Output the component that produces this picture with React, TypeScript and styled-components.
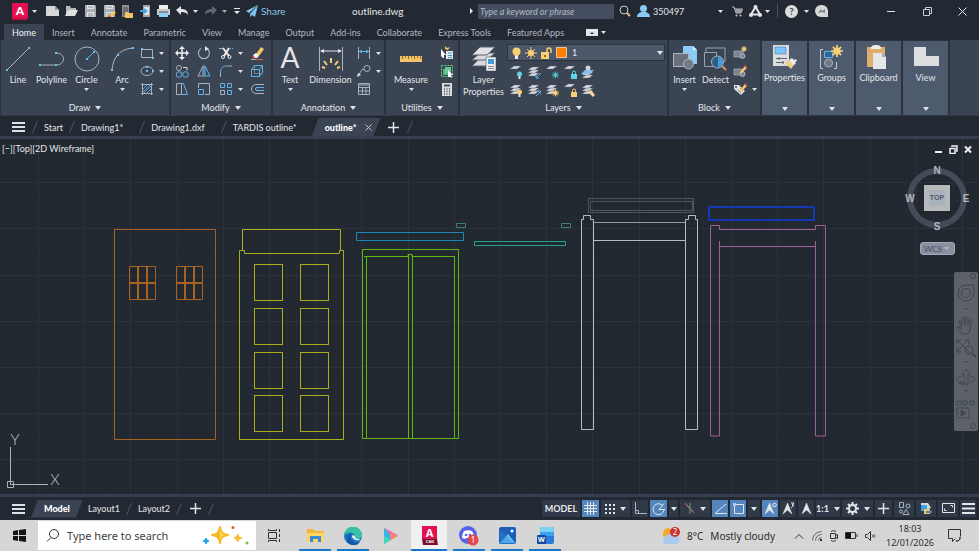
import React from 'react';
import styled, { createGlobalStyle } from 'styled-components';

const Global = createGlobalStyle`
  * { box-sizing: border-box; }
  body { margin: 0; font-family: Lato, "Open Sans", sans-serif; font-size: 9px; color: #e4e7ea; background: #222933; }
  button, input, select { font: inherit; color: inherit; }
  button { padding: 0; border: 0; background: none; }
  svg { display: block; flex: none; }
`;

/* ---------- primitives ---------- */

type IcoProps = { w: number; h: number; children: React.ReactNode };
const Ico = ({ w, h, children }: IcoProps) => (
  <svg width={w} height={h} viewBox={`0 0 ${w} ${h}`} fill="none" aria-hidden="true">{children}</svg>
);
const Caret = ({ c = '#dfe2e6', big = false }: { c?: string; big?: boolean }) => (
  <Ico w={big ? 6 : 5} h={big ? 4 : 3}><path d={big ? 'M0 0h6L3 4z' : 'M0 0h5L2.500 3z'} fill={c} /></Ico>
);

const Page = styled.div`
  min-height: 100vh;
  display: flex;
  flex-direction: column;
`;
const Cell = styled.button<{ $w?: number }>`
  display: flex;
  flex: none;
  align-items: center;
  justify-content: center;
  width: ${p => (p.$w ? `${p.$w}px` : 'auto')};
`;
const Pair = styled.div<{ $gap?: number }>`
  display: flex;
  align-items: center;
  gap: ${p => p.$gap || 5}px;
`;

/* ---------- title bar ---------- */

const TitleBar = styled.header`
  display: flex;
  align-items: center;
  height: 22px;
  padding-left: 11px;
`;
const QuickAccess = styled.div`
  display: flex;
  align-items: center;
  gap: 6px;
  margin-left: 6px;
`;
const Share = styled.button`
  display: flex;
  align-items: center;
  gap: 3px;
  margin-left: 5px;
  color: #8cc4ea;
  font-size: 10px;
`;
const FileName = styled.h1`
  flex: 1;
  margin: 0;
  text-align: center;
  font-size: 10px;
  font-weight: 400;
`;
const SearchInput = styled.input`
  width: 136px;
  height: 15px;
  margin: 0 5px 0 4px;
  padding: 0 2px;
  border: 0;
  background: #454e60;
  font-style: italic;
  &::placeholder { color: #b4bac4; opacity: 1; }
`;
const Account = styled.button`
  display: flex;
  align-items: center;
  justify-content: space-between;
  width: 86px;
  margin: 0 9px 0 6px;
  span { flex: 1; text-align: left; margin-left: 3px; }
`;
const TitleTools = styled.div`
  display: flex;
  align-items: center;
  gap: 6px;
`;
const Divider = styled.i`
  width: 1px;
  height: 14px;
  margin: 0 1px;
  background: #4a5364;
`;
const WindowButtons = styled.div`
  display: flex;
  margin-left: 45px;
`;

const disk = (
  <>
    <path d="M1 1h10l1 1v11H1z" fill="#a9acb1" />
    <path d="M3 1h7v4H3zM3 8h7v5H3z" fill="#dfe1e3" />
    <path d="M4 10h5M4 12h5M4 3h5" stroke="#8b8f95" />
  </>
);

const Title = () => (
  <TitleBar>
    <Cell aria-label="Application menu">
      <svg width="18" height="19" viewBox="0 0 18 19" fill="none">
        <path d="M1 3l3-2v14l13 1-2 2H1z" fill="#8e0c36" />
        <path d="M1 1h16v15H1z" fill="#e51050" />
        <path d="M1 17h15" stroke="#c50c45" strokeWidth="2" />
        <text x="9" y="13" textAnchor="middle" fontSize="12" fontWeight="900" fill="#fff">A</text>
      </svg>
    </Cell>
    <Cell aria-label="Application options" $w={11}><Caret /></Cell>
    <QuickAccess>
      <Cell aria-label="New" $w={13}><Ico w={13} h={12}><path d="M0 1h9l4 4v6H0z" fill="#d6d6d6" /><path d="M9 1v4h4z" fill="#999" /></Ico></Cell>
      <Cell aria-label="Open" $w={13}><Ico w={13} h={12}><path d="M1 11V1h4l1 2h5v2" fill="#b9b9b9" /><path d="M0 11l3-6h10l-3 6z" fill="#e0e0e0" /></Ico></Cell>
      <Cell aria-label="Save" $w={13}><Ico w={13} h={14}>{disk}</Ico></Cell>
      <Cell aria-label="Save as" $w={13}><Ico w={13} h={14}>{disk}<path d="M5 13l6-6 2 2-5 4z" fill="#f7c64d" /><path d="M5 13l1-2 2 2z" fill="#e04848" /></Ico></Cell>
      <Cell aria-label="Open from web" $w={11}><Ico w={11} h={13}><path d="M0 0h7v12H0z" fill="#8f8f8f" /><path d="M1 2h5v8H1z" fill="#6c6c6c" /><path d="M3 7h3l1 1h4v5H3z" fill="#f2c469" /></Ico></Cell>
      <Cell aria-label="Save to mobile" $w={12}><Ico w={11} h={13}><path d="M3 0h7v12H3z" fill="#a3a3a3" /><path d="M4 2h5v8H4z" fill="#e3e3e3" /><path d="M0 5h4V3l4 3-4 3V7H0z" fill="#3ca5e8" /></Ico></Cell>
      <Cell aria-label="Plot" $w={13}><Ico w={13} h={13}><path d="M2 0h9v4H2z" fill="#efefef" /><path d="M0 4h13v6H0z" fill="#c9c9c9" /><path d="M2 7h9v5H2z" fill="#8fd0f5" /><path d="M2 7h9" stroke="#555" /></Ico></Cell>
      <Pair $gap={4}>
        <Cell aria-label="Undo" $w={13}><Ico w={13} h={10}><path d="M0 4l5-4v3c5 0 7 2 7 6-1-2-3-3-7-3v3z" fill="#e3e5e8" /></Ico></Cell>
        <Cell aria-label="Undo history"><Caret /></Cell>
      </Pair>
      <Pair>
        <Cell aria-label="Redo" $w={13}><Ico w={12} h={10}><path d="M12 4L7 0v3C2 3 0 5 0 9c1-2 3-3 7-3v3z" fill="#616770" /></Ico></Cell>
        <Cell aria-label="Redo history"><Caret c="#a6abb3" /></Cell>
      </Pair>
      <Cell aria-label="Customize toolbar" $w={8}><Ico w={6} h={6}><path d="M0 0h6v1H0zM0 3h6L3 6z" fill="#e3e5e8" /></Ico></Cell>
    </QuickAccess>
    <Share>
      <Ico w={12} h={12}><path d="M12 0L0 6l3 2zM12 0L4 9v3l2-2 3 2z" fill="#7cc3f2" /></Ico>
      Share
    </Share>
    <FileName>outline.dwg</FileName>
    <Cell aria-label="Collapse search" $w={4}><Ico w={4} h={6}><path d="M0 0l3 3-3 3z" fill="#e3e5e8" /></Ico></Cell>
    <SearchInput aria-label="Keyword search" placeholder="Type a keyword or phrase" />
    <Cell aria-label="Search"><Ico w={12} h={12}><circle cx="5" cy="5" r="4" stroke="#c9ccd1" /><path d="M8 8l3 3" stroke="#e8b98a" strokeWidth="2" /></Ico></Cell>
    <Account>
      <Ico w={13} h={12}><circle cx="6.500" cy="3.500" r="3.500" fill="#8cc8f5" /><path d="M0 12c0-3 2-5 6.500-5S13 9 13 12z" fill="#8cc8f5" /></Ico>
      <span>350497</span>
      <Caret />
    </Account>
    <TitleTools>
      <Cell aria-label="App store"><Ico w={11} h={11}><path d="M0 1h2l2 6h5l1.500-4H3" stroke="#b9bdc4" /><path d="M3 3h8L9 7H4z" fill="#9b9fa7" /><circle cx="4.500" cy="9.500" r="1" fill="#ccc" /><circle cx="8.500" cy="9.500" r="1" fill="#ccc" /></Ico></Cell>
      <Pair $gap={3}>
        <Cell aria-label="Autodesk account"><Ico w={13} h={12}><path d="M6.500 2L2 9.500h9z" stroke="#e3e5e8" strokeWidth="2" /><circle cx="6.500" cy="2" r="2" fill="#e3e5e8" /><circle cx="2" cy="10" r="2" fill="#e3e5e8" /><circle cx="11" cy="10" r="2" fill="#e3e5e8" /></Ico></Cell>
        <Cell aria-label="Account options"><Caret /></Cell>
      </Pair>
      <Divider />
      <Cell aria-label="Help"><svg width="13" height="13" viewBox="0 0 13 13"><circle cx="6.500" cy="6.500" r="6.500" fill="#dcdcdc" /><text x="6.500" y="10" fontSize="10" fontWeight="700" textAnchor="middle" fill="#3d4552">?</text></svg></Cell>
      <Cell aria-label="Help options"><Caret /></Cell>
      <Cell aria-label="Assistant"><Ico w={13} h={12}><path d="M6 0h1a6 6 0 016 6v6H6A6 6 0 016 0z" fill="#d8d8d8" /><path d="M3 8l3-4 1 2 3-2v4l-3-1z" fill="#7e838b" /></Ico></Cell>
    </TitleTools>
    <WindowButtons>
      <Cell aria-label="Minimize" $w={36}><Ico w={9} h={9}><path d="M0 4.500h8" stroke="#e3e5e8" /></Ico></Cell>
      <Cell aria-label="Restore" $w={36}><Ico w={9} h={9}><path d="M.5 2.500h6v6h-6zM2.500 2V.5h6v6H7" stroke="#c8ccd2" /></Ico></Cell>
      <Cell aria-label="Close" $w={34}><Ico w={9} h={9}><path d="M.5.5l8 8M8.500.5l-8 8" stroke="#e3e5e8" /></Ico></Cell>
    </WindowButtons>
  </TitleBar>
);

/* ---------- ribbon tabs ---------- */

const RibbonTabs = styled.nav`
  display: flex;
  align-items: flex-end;
  height: 18px;
  padding-left: 4px;
`;
const RibbonTab = styled.button<{ $on?: boolean }>`
  height: 16px;
  padding: 0 8px;
  line-height: 17px;
  white-space: nowrap;
  color: ${p => (p.$on ? '#f2f3f5' : '#b2b8c1')};
  background: ${p => (p.$on ? '#3b4453' : 'transparent')};
`;
const RibbonToggle = styled.button`
  display: flex;
  align-items: center;
  gap: 3px;
  height: 16px;
  margin-left: 14px;
`;
const tabs = ['Home', 'Insert', 'Annotate', 'Parametric', 'View', 'Manage', 'Output', 'Add-ins', 'Collaborate', 'Express Tools', 'Featured Apps'];

/* ---------- ribbon panels ---------- */

const Ribbon = styled.div`
  display: flex;
  gap: 2px;
  height: 76px;
  padding-left: 1px;
  background: #2a323e;
  border-bottom: 1px solid #313a47;
`;
const RibbonRest = styled.div`
  flex: 1;
  background: #3b4453;
`;
const Panel = styled.section<{ $w: number }>`
  display: flex;
  flex-direction: column;
  flex: none;
  width: ${p => p.$w}px;
  background: #3b4453;
`;
const PanelBody = styled.div`
  display: flex;
  flex: 1;
  padding-top: 4px;
`;
const PanelName = styled.button`
  display: flex;
  align-items: center;
  justify-content: center;
  gap: 5px;
  height: 15px;
`;
const BigButton = styled.button<{ $w: number }>`
  display: flex;
  flex-direction: column;
  flex: none;
  align-items: center;
  width: ${p => p.$w}px;
  line-height: 12px;
  white-space: nowrap;
`;
const BigIcon = styled.span`
  display: flex;
  align-items: center;
  justify-content: center;
  height: 30px;
`;
const DropMark = styled.span`
  padding-top: 2px;
`;
const ToolGrid = styled.div<{ $cols: string; $inset?: number }>`
  display: grid;
  grid-template-columns: ${p => p.$cols};
  grid-auto-rows: 18px;
  align-content: start;
  align-items: center;
  justify-items: ${p => (p.$inset === undefined ? 'center' : 'start')};
  padding-left: ${p => p.$inset || 0}px;
`;
const LayerArea = styled.div`
  display: flex;
  flex: 1;
  flex-direction: column;
  padding-right: 2px;
`;
const LayerPicker = styled.label`
  display: flex;
  align-items: center;
  gap: 4px;
  height: 17px;
  margin-bottom: 2px;
  padding: 0 1px 0 4px;
  background: #4c576a;
  border: 1px solid #2a323e;
`;
const LayerSelect = styled.select`
  flex: 1;
  min-width: 0;
  height: 14px;
  padding: 0 0 0 1px;
  border: 0;
  appearance: none;
  background: transparent;
`;
const Collapsed = styled.button`
  display: flex;
  flex: none;
  flex-direction: column;
  align-items: center;
  width: 45px;
  margin-top: 1px;
  padding: 3px 0 4px;
  line-height: 14px;
  background: #4e5a6d;
  span { flex: 1; }
`;

const Big = ({ label, label2, w, icon, drop }: { label: string; label2?: string; w: number; icon: React.ReactNode; drop?: boolean }) => (
  <BigButton $w={w}>
    <BigIcon>{icon}</BigIcon>
    <span>{label}</span>
    {label2 && <span>{label2}</span>}
    {drop && <DropMark><Caret /></DropMark>}
  </BigButton>
);
const Tool = ({ name, children, drop }: { name: string; children: React.ReactNode; drop?: boolean }) =>
  drop ? (
    <Pair>
      <Cell aria-label={name} $w={14}><Ico w={14} h={14}>{children}</Ico></Cell>
      <Cell aria-label={`${name} options`}><Caret /></Cell>
    </Pair>
  ) : (
    <Cell aria-label={name}><Ico w={14} h={14}>{children}</Ico></Cell>
  );

const G = '#a9b2be';
const B = '#5fb4ec';
const dot = (x: number, y: number) => <rect x={x - 1} y={y - 1} width="2" height="2" fill="#6cc0f5" />;

const sheet = (y: number, c = '#d8dadd') => <path d={`M5 ${y}h7l-4 3H1z`} fill={c} stroke="#5b6270" strokeWidth=".4" />;
const sheets = <>{sheet(8)}{sheet(5)}{sheet(2)}</>;
const miniBulb = (c: string) => <><circle cx="10.500" cy="9" r="2.500" fill={c} /><path d="M9.500 11h2v3h-2z" fill="#e7e7e7" /></>;
const miniSun = (c: string) => <><circle cx="10.500" cy="10" r="2" fill={c} /><path d="M10.500 6.500v7M7 10h7M8 7.500l5 5M13 7.500l-5 5" stroke={c} /></>;
const miniLock = (c: string) => <><path d="M8 9h6v5H8z" fill={c} /><path d="M9.500 9V7.500a1.500 1.500 0 013 0V9" stroke={c} /></>;
const star = (x: number, y: number, r: number) => (
  <>
    <circle cx={x} cy={y} r={r * 0.6} fill="#f8cf74" />
    <path d={`M${x} ${y - r}v${2 * r}M${x - r} ${y}h${2 * r}M${x - r * 0.7} ${y - r * 0.7}l${1.4 * r} ${1.4 * r}M${x + r * 0.7} ${y - r * 0.7}l${-1.4 * r} ${1.4 * r}`} stroke="#f8cf74" strokeWidth={r / 3.5} />
  </>
);
const pencil = <><path d="M7 8l5-6 2 2-5 5-2 1z" fill="#f4c560" /><path d="M12 1l2 2-1 1-2-2z" fill="#e5484d" /></>;
const blockBase = <><path d="M1 5h9v6H1z" fill="#7c838e" stroke="#b0b6bf" strokeWidth=".7" /><circle cx="9.500" cy="10" r="2.500" fill="#7c838e" stroke="#b0b6bf" /></>;

const DrawPanel = () => (
  <Panel $w={168} aria-label="Draw">
    <PanelBody>
      <Big w={34} label="Line" icon={<Ico w={26} h={26}><path d="M2 24L24 2" stroke={G} />{dot(2, 24)}{dot(24, 2)}</Ico>} />
      <Big w={33} label="Polyline" icon={<Ico w={26} h={26}><path d="M1 19h16c10 0 10-12 0-12" stroke={G} />{dot(1, 19)}{dot(17, 19)}{dot(17, 7)}</Ico>} />
      <Big w={37} label="Circle" drop icon={<Ico w={26} h={26}><circle cx="13" cy="13" r="12" stroke={G} /><path d="M13 13l7-7" stroke={B} />{dot(13, 13)}{dot(20, 6)}</Ico>} />
      <Big w={34} label="Arc" drop icon={<Ico w={26} h={26}><path d="M3 24C4 12 10 3 24 2" stroke={G} />{dot(3, 24)}{dot(9, 9)}{dot(24, 2)}</Ico>} />
      <ToolGrid $cols="26px" $inset={1}>
        <Tool name="Rectangle" drop><path d="M1.500 3.500h11v8h-11z" stroke={G} />{dot(2, 3)}{dot(13, 12)}</Tool>
        <Tool name="Ellipse" drop><ellipse cx="7" cy="7" rx="6" ry="4.500" stroke={G} />{dot(7, 7)}{dot(7, 3)}{dot(13, 7)}</Tool>
        <Tool name="Hatch" drop><path d="M1 2.500h12M1 11.500h12M2.500 1v12M11.500 1v12" stroke={G} /><path d="M3 7l4-4M3 10l7-7M4 11l7-7M7 11l4-4" stroke={B} strokeWidth=".8" /></Tool>
      </ToolGrid>
    </PanelBody>
    <PanelName>Draw<Caret big /></PanelName>
  </Panel>
);

const ModifyPanel = () => (
  <Panel $w={100} aria-label="Modify">
    <PanelBody>
      <ToolGrid $cols="22px 22px 32px 20px">
        <Tool name="Move"><path d="M7 1v12M1 7h12" stroke="#eee" strokeWidth="1.500" /><path d="M7 0l3 3H4zM7 14l3-3H4zM0 7l3-3v6zM14 7l-3-3v6z" fill="#eee" /></Tool>
        <Tool name="Rotate"><path d="M4 2.500a5.500 5.500 0 107 1" stroke={G} strokeWidth="1.200" /><path d="M8 0l4 3-4 2z" fill="#e5e7ea" /></Tool>
        <Tool name="Trim" drop><path d="M4 2l6 8M10 2L5 10" stroke="#eee" strokeWidth="2" /><circle cx="4" cy="11" r="1.500" stroke="#eee" /><circle cx="10.500" cy="11" r="1.500" stroke="#eee" /><path d="M0 2.500h4" stroke={G} /><path d="M10 2.500h4" stroke={B} strokeDasharray="2 1" /></Tool>
        <Tool name="Erase"><path d="M6 8l5-7 3 2-5 7z" fill="#f6c866" /><path d="M3 9l3-2 3 3-2 2H4z" fill="#f4f4f4" /><path d="M3 9l2 3-2 1-1-2z" fill="#e03c44" /><path d="M1 13.500h5" stroke={G} /><path d="M6 13.500h7" stroke="#d65a55" /></Tool>
        <Tool name="Copy"><circle cx="4" cy="4" r="2.500" stroke={G} /><path d="M8 3.500h4v3" stroke="#ddd" /><circle cx="4" cy="10.500" r="2.800" stroke={B} /><circle cx="10.500" cy="10.500" r="2.800" stroke={B} /></Tool>
        <Tool name="Mirror"><path d="M6 2v10H1z" stroke={G} /><path d="M8 2v10h5z" stroke={B} /><path d="M7 0v14" stroke={B} strokeWidth=".6" /></Tool>
        <Tool name="Fillet" drop><path d="M1.500 13V9" stroke={G} /><path d="M1.500 9c0-5 2-7 7-7" stroke={B} /><path d="M8.500 2H13" stroke={G} /></Tool>
        <Tool name="Explode"><path d="M1.500 5.500h8v7h-8zM1.500 5.500l3-4h8l-3 4M12.500 1.500v7l-3 4" stroke={B} /><path d="M4.500 1.500v8h8" stroke={G} strokeWidth=".5" /></Tool>
        <Tool name="Stretch"><path d="M1.500 1.500h5v11h-5z" stroke={G} /><path d="M6.500 1.500h2l4 11h-6" stroke={B} /></Tool>
        <Tool name="Scale"><path d="M1.500 6V1.500h11v11H8" stroke={G} /><path d="M1.500 7.500h5v5h-5z" stroke={B} /></Tool>
        <Tool name="Array" drop><path d="M1.500 1.500h4v4h-4zM8.500 1.500h4v4h-4zM8.500 8.500h4v4h-4z" stroke={B} /><path d="M1.500 8.500h4v4h-4z" stroke={G} /></Tool>
        <Tool name="Offset"><path d="M14 2.500H6a4.500 4.500 0 000 9h8" stroke={G} /><path d="M14 5.500H7a1.500 1.500 0 000 3h7" stroke={B} /></Tool>
      </ToolGrid>
    </PanelBody>
    <PanelName>Modify<Caret big /></PanelName>
  </Panel>
);

const AnnotationPanel = () => (
  <Panel $w={111} aria-label="Annotation">
    <PanelBody>
      <Big w={34} label="Text" drop icon={<svg width="26" height="30" viewBox="0 0 26 30" overflow="visible"><text x="13" y="24" textAnchor="middle" fontSize="28" fill="#e3e5e8">A</text></svg>} />
      <Big w={47} label="Dimension" icon={<Ico w={26} h={26}><path d="M1.500 1v24M24.500 1v24" stroke={G} /><path d="M3 5h20" stroke="#dfe2e6" /><path d="M2 5l4-2v4zM24 5l-4-2v4z" fill="#dfe2e6" /><path d="M7 22l-3-1M9 19l-3-4M13 17v-5M17 19l3-4M19 22l3-1" stroke="#f8cf74" strokeWidth="2" /></Ico>} />
      <ToolGrid $cols="26px" $inset={3}>
        <Tool name="Linear" drop><path d="M1.500 1v12M12.500 1v12" stroke={G} /><path d="M2 5.500h10" stroke={B} /><path d="M2 5.500l3-2v4zM12 5.500l-3-2v4z" fill={B} /></Tool>
        <Tool name="Leader" drop><circle cx="10" cy="4.500" r="3" stroke={G} /><path d="M7 5.500H5l-3 5" stroke={G} /><path d="M0 13l1-4 3 2z" fill="#dfe2e6" /></Tool>
        <Tool name="Table"><path d="M1.500 1.500h11v11h-11zM1.500 5.500h11M1.500 9h11M5.500 5v8M9 5v8" stroke={G} /><path d="M2 2h10v2H2z" fill="#737c8a" /></Tool>
      </ToolGrid>
    </PanelBody>
    <PanelName>Annotation<Caret big /></PanelName>
  </Panel>
);

const UtilitiesPanel = () => (
  <Panel $w={72} aria-label="Utilities">
    <PanelBody>
      <Big w={50} label="Measure" drop icon={<Ico w={22} h={6}><path d="M0 0h22v6H0z" fill="#f2c469" /><path d="M2.500 0v3M5.500 0v2M8.500 0v3M11.500 0v2M14.500 0v3M17.500 0v2M20.500 0v3" stroke="#8f6f30" /></Ico>} />
      <ToolGrid $cols="22px">
        <Tool name="Quick select"><path d="M6 5h7v8H6z" fill="#e6e6e6" /><path d="M8 7h4M8 9.500h4M8 11.500h4" stroke="#3f97d8" /><path d="M1 3l5 6-2 0v3H3L1 10z" fill="#fff" /><path d="M5 0l2 2 3-1-2 3-3-1z" fill="#f5c45a" /></Tool>
        <Tool name="Select all"><path d="M1.500 1.500h11v11h-11z" stroke="#5ec58b" strokeDasharray="2 1" /><path d="M3 5h6v6H3z" fill="#57b680" /><path d="M5 3h6v6H5z" fill="#6cc894" /><path d="M8 6l5 5h-2l1 3-2-1-2 0z" fill="#fff" /></Tool>
        <Tool name="Calculator"><path d="M2 1h10v13H2z" fill="#d9dbde" /><path d="M4 2.500h6v2H4z" fill="#4a5260" /><path d="M4 7h1M6.500 7h1M9 7h1M4 9.500h1M6.500 9.500h1M9 9.500h1M4 12h1M6.500 12h1M9 12h1" stroke="#4a5260" strokeWidth="1.500" /></Tool>
      </ToolGrid>
    </PanelBody>
    <PanelName>Utilities<Caret big /></PanelName>
  </Panel>
);

const layerTools: [string, React.ReactNode][] = [
  ['Layer off', <>{sheet(1)}{miniBulb('#5fd3ea')}</>],
  ['Layer isolate', <>{sheets}<path d="M14 8l-5 5M9 10v3h3" stroke={B} /></>],
  ['Layer freeze', <>{sheet(1)}{miniSun('#4cc0cf')}</>],
  ['Layer lock', <>{sheet(1)}{miniLock('#5fd3ea')}</>],
  ['Make current', <>{sheet(10, '#d8dadd')}{sheet(7, '#e4e6e8')}<path d="M4 5h9l-4 4H0z" fill="#7fc0ec" /><circle cx="7" cy="3" r="2.500" fill="#cfd2d6" /></>],
  ['Layer on', <>{sheets}{miniBulb('#f8cf74')}</>],
  ['Layer unisolate', <>{sheets}<path d="M9 13l5-5M10 8h4v4" stroke={B} /></>],
  ['Layer thaw', <>{sheets}{miniSun('#f8cf74')}</>],
  ['Layer unlock', <>{sheet(1)}{miniLock('#f8cf74')}</>],
  ['Match layer', <>{sheets}<path d="M7 9l3-2 4 5-2 2z" fill="#f3d79a" /></>],
];

const LayersPanel = () => (
  <Panel $w={207} aria-label="Layers">
    <PanelBody>
      <Big w={47} label="Layer" label2="Properties" icon={
        <Ico w={26} h={26}>
          <path d="M9 12h15l-8 8H1z" fill="#d8dadd" stroke="#5b6270" /><path d="M9 7h15l-8 7H1z" fill="#d8dadd" stroke="#5b6270" /><path d="M9 1h15l-8 8H1z" fill="#e0e2e4" stroke="#5b6270" />
          <path d="M15 11h10v14H15z" fill="#eee" stroke="#3b4453" strokeWidth=".5" /><path d="M17 13h6v5h-6z" fill="#3f9ae0" /><path d="M17 20.500h6M17 22.500h6" stroke="#888" />
        </Ico>} />
      <LayerArea>
        <LayerPicker>
          <Ico w={9} h={12}><circle cx="4.500" cy="4.500" r="4" fill="#f8cf74" /><path d="M2.500 7h4v2h-4z" fill="#f8cf74" /><path d="M3 9h3v3H3z" fill="#eee" /></Ico>
          <Ico w={12} h={12}><circle cx="6" cy="6" r="3" fill="#f8cf74" /><path d="M6 0v12M0 6h12M2 2l8 8M10 2l-8 8" stroke="#f8cf74" /></Ico>
          <Ico w={11} h={12}><path d="M0 5h8v7H0z" fill="#f8cf74" /><path d="M6 5V3a2 2 0 014 0v3" stroke="#f8cf74" strokeWidth="1.500" /><path d="M3 8h2v2H3z" fill="#8a6a25" /></Ico>
          <Ico w={11} h={11}><path d="M.5.5h10v10H.5z" fill="#ff7f00" stroke="#e8c7a0" /></Ico>
          <LayerSelect aria-label="Current layer" defaultValue="1"><option>1</option></LayerSelect>
          <Caret big />
        </LayerPicker>
        <ToolGrid $cols="repeat(5, 18px)">
          {layerTools.map(([n, art]) => <Tool key={n} name={n}>{art}</Tool>)}
        </ToolGrid>
      </LayerArea>
    </PanelBody>
    <PanelName>Layers<Caret big /></PanelName>
  </Panel>
);

const BlockPanel = () => (
  <Panel $w={91} aria-label="Block">
    <PanelBody>
      <Big w={31} label="Insert" drop icon={<Ico w={25} h={28}><path d="M11 1h10l4 4v14H11z" fill="#8ccbf6" /><path d="M21 1v4h4z" fill="#d4ecfb" /><path d="M1.500 8.500h15v13h-15z" fill="#68707c" stroke="#b0b6bf" /><circle cx="16.500" cy="19" r="5" fill="#737b87" stroke="#b0b6bf" /></Ico>} />
      <Big w={31} label="Detect" icon={<Ico w={25} h={26}><path d="M3 6V2h19v14M1.500 6.500h12v14h-12z" stroke="#9aa3b0" /><circle cx="14.500" cy="16" r="6" fill="#2b5d88" stroke="#a5b6c7" /><path d="M15 11v10c4 0 5-3 5-5s-1-5-5-5z" fill="#4d9bd4" /><path d="M19 20l4 4" stroke="#d69260" strokeWidth="2" /></Ico>} />
      <ToolGrid $cols="26px" $inset={2}>
        <Tool name="Create block">{blockBase}{star(11, 3, 3)}</Tool>
        <Tool name="Edit block">{blockBase}{pencil}</Tool>
        <Tool name="Edit attributes" drop><path d="M1 3h5l6 6-4 4-7-6z" fill="#dcdee1" /><circle cx="3" cy="5" r="1" fill="#555" /><path d="M5 8l3 3M7 6l3 3" stroke="#888" />{pencil}</Tool>
      </ToolGrid>
    </PanelBody>
    <PanelName>Block<Caret big /></PanelName>
  </Panel>
);

const collapsed: [string, React.ReactNode][] = [
  ['Properties', <><path d="M1 1h16v21H1z" fill="#dcdee0" /><path d="M3 3h11v7H3z" fill="#7cc4f7" stroke="#4b88b5" strokeWidth=".6" /><path d="M4 14.500h11M4 18.500h8M7 13v3M11 17v3" stroke="#5c6370" /><path d="M13 19l4-3 5 5-3 4z" fill="#f2d08a" /><path d="M17 16l3-2 2 2 2-1 1 2-2 1 1 2-3 1z" fill="#eee" /></>],
  ['Groups', <><path d="M4 5.500H1.500v19H4M15 24.500h2.500V18" stroke="#c3c8cf" /><path d="M5.500 7.500h8v6h-8z" fill="#2f6590" stroke="#5fb4ec" /><circle cx="9.500" cy="19" r="4" fill="#707986" stroke="#a9b2be" />{star(18, 7, 6)}</>],
  ['Clipboard', <><path d="M1 3h18v20H1z" fill="#dfae6c" /><path d="M5 4c0-2 2-3 4-3h2c2 0 4 1 4 3v1H5z" fill="#eee" /><path d="M7 9h9l4 4v12H7z" fill="#e4e6e8" /><path d="M16 9v4h4z" fill="#aaa" /></>],
  ['View', <path d="M1 3h12v9h13v10H1z" fill="#dcdee0" />],
];

/* ---------- slanted tab strips ---------- */

const Strip = styled.div<{ $h: number; $top?: number }>`
  display: flex;
  align-items: center;
  height: ${p => p.$h}px;
  padding-top: ${p => p.$top || 0}px;
  background: #222933;
`;
const MenuButton = styled.button`
  width: 13px;
  height: 10px;
  margin: 0 6px 0 12px;
  border: solid #dfe2e6;
  border-width: 2px 0;
  background: linear-gradient(#dfe2e6, #dfe2e6) center / 100% 2px no-repeat;
`;
const SlantTab = styled.button<{ $on?: boolean; $end?: number }>`
  display: flex;
  align-items: center;
  gap: 8px;
  height: 18px;
  padding: 0 ${p => p.$end || 5}px 0 ${p => (p.$on ? 13 : 5)}px;
  font-weight: ${p => (p.$on ? 900 : 400)};
  color: ${p => (p.$on ? '#fff' : '#e4e7ea')};
  background: ${p => (p.$on ? '#3b4453' : 'transparent')};
  clip-path: ${p => (p.$on ? 'polygon(7px 0, 100% 0, calc(100% - 7px) 100%, 0 100%)' : 'none')};
`;
const Slash = () => <Ico w={8} h={14}><path d="M1.500 13l5-12" stroke="#4d5665" /></Ico>;
const Plus = () => <Ico w={11} h={11}><path d="M5.500 0v11M0 5.500h11" stroke="#e3e5e8" strokeWidth="1.500" /></Ico>;

/* ---------- drawing area ---------- */

const Viewport = styled.main`
  position: relative;
  flex: 1;
  min-height: 355px;
  border: solid #363f4e;
  border-width: 3px 0;
  background: #212830;
  > svg { position: absolute; inset: 0; width: 100%; height: 100%; }
`;
const ViewLabel = styled.div`
  position: absolute;
  top: 4px;
  left: 2px;
  line-height: 12px;
`;
const DocButtons = styled.div`
  position: absolute;
  top: 6px;
  right: 7px;
  display: flex;
  gap: 6px;
`;
const ViewCube = styled.div`
  position: absolute;
  top: 24px;
  right: 8px;
`;
const Wcs = styled.button`
  position: absolute;
  top: 103px;
  right: 24px;
  display: flex;
  align-items: center;
  justify-content: space-between;
  width: 35px;
  height: 13px;
  padding: 0 5px 0 3px;
  border: 1px solid #a4a8b8;
  border-radius: 3px;
  background: #8b8fa0;
  color: #4c5161;
  font-size: 8px;
`;
const NavBar = styled.nav`
  position: absolute;
  top: 133px;
  right: 1px;
  width: 24px;
  height: 159px;
  border-radius: 2px;
  background: #5d6268;
`;

const pane = (x: number, y: number) => <rect key={`${x}-${y}`} x={x} y={y} width="28" height="36" />;
const lattice = (x: number) => (
  <>
    <path d={`M${x}.5 266.500h26v33h-26z`} />
    <path d={`M${x + 9} 266v34M${x + 18} 266v34M${x} 283h26`} strokeWidth="2" />
  </>
);
const minor = [9, 18, 27, 37, 55, 64, 74, 83, 101, 111, 120, 129, 148, 157, 166, 175, 194, 203, 212, 221];
const major = [0, 46, 92, 139, 185];
const gridLines = (at: number[]) => at.map(n => `M${n}.5 0v231M0 ${n}.5h231`).join('');

const Drawing = () => (
  <svg aria-label="Model space drawing" fill="none">
    <defs>
      <pattern id="grid" width="231" height="231" patternUnits="userSpaceOnUse" patternTransform="translate(38 -3)">
        <path d={gridLines(minor)} stroke="#232b34" />
        <path d={gridLines(major)} stroke="#2a323e" />
      </pattern>
    </defs>
    <rect width="100%" height="100%" fill="url(#grid)" />
    <g transform="translate(0 -139)">
      <g stroke="#a8611f"><path d="M114.500 229.500h101v210h-101z" />{lattice(129)}{lattice(176)}</g>
      <g stroke="#acac1c">
        <path d="M242.500 251v-21.500h98V251" />
        <path d="M239.500 439.500v-189h5v3h95v-3h4v189z" />
        {[264.5, 308.5, 352.5, 395.5].map(y => [pane(254.5, y), pane(300.5, y)])}
      </g>
      <g stroke="#62b414">
        <path d="M362.500 249.500h96v189h-96zM364 256.500h44v-2h4v2h43" />
        <path d="M366.500 257v181M454.500 257v181M408.500 255v183M412.500 255v183" />
      </g>
      <path d="M356.500 232.500h107v8h-107z" stroke="#1d86b4" />
      <path d="M456.500 223.500h9v4h-9zM561.500 223.500h9v4h-9z" stroke="#427c74" />
      <path d="M474.500 241.500h91v4h-91z" stroke="#22a48a" />
      <path d="M588.500 198.500h105v14h-105zM590.500 201.500h102v9h-102z" stroke="#515459" />
      <path d="M581.500 429.500v-210h2v-4h7v4h3v210zM685.500 429.500v-210h3v-4h7v4h2v210zM593.500 240.500h92" stroke="#b8bcc0" />
      <path d="M593.500 222.500h92" stroke="#989ca1" />
      <path d="M709 207h105v13H709z" stroke="#1438b4" strokeWidth="2" />
      <path d="M719.500 241v195h-9V225.500h9v4h96v-4h10v210.500h-10V241M719.500 246.500h96" stroke="#a05e99" />
    </g>
    <g stroke="#aeb3ba">
      <path d="M7.500 342.500h6v6h-6zM10.500 345V308M10 345.500h38" />
    </g>
    <g fill="#c4c8cd" fontWeight="300" fontSize="15" textAnchor="middle">
      <text x="15" y="306">Y</text>
      <text x="55" y="346">X</text>
    </g>
  </svg>
);

const CubeArt = () => (
  <svg width="66" height="68" viewBox="0 0 66 68" fontFamily='"Liberation Sans"' fontWeight="700" fontSize="10" fill="#b3b8bf" textAnchor="middle">
    <circle cx="32" cy="35" r="27" fill="none" stroke="#454c57" strokeWidth="6" />
    <path d="M19 22h26v26H19z" fill="#b7baba" />
    <path d="M24 27h16v16H24z" fill="#a9b3bd" />
    <text x="32" y="11">N</text><text x="32" y="67">S</text><text x="5" y="39">W</text><text x="61" y="39">E</text>
    <text x="32" y="37" fontSize="7" fill="#525a66">TOP</text>
  </svg>
);

const NavArt = () => (
  <svg width="24" height="159" viewBox="0 0 24 159" fill="none" stroke="#41464e">
    <circle cx="19" cy="4" r="2.500" /><circle cx="19" cy="154" r="2.500" />
    <path d="M12 13h8v8a8 8 0 11-8-8z" /><circle cx="12" cy="21" r="4.500" />
    <path d="M10 36h4l-2 2zM10 89h4l-2 2zM10 118h4l-2 2z" fill="#41464e" stroke="none" />
    <path d="M8 62c-2-3-4-5-5-7 1-1 2 0 4 2l-2-8c1-1 2 0 3 5V46c1-1 2-1 2 0l1 7 1-8c1-1 2 0 2 1v8l2-6c1-1 2 0 2 1l-2 8c0 3-2 5-3 5z" />
    <path d="M3 68l13 13M14 68L3 80M3 72v-4h4M11 68h4v4M3 76v4h4" /><circle cx="15" cy="78" r="4" /><path d="M18 81l4 4" strokeWidth="2" />
    <path d="M10 113V102H8l4-5 4 5h-2v11z" /><path d="M8 104c-7 1-7 6 0 7h5M16 104c7 1 6 6 0 6M8 109l-3 2 4 2" />
    <path d="M3 129h4v4H3zM9 129h4v4H9zM16 129h4v4h-4zM3 136h12v10H3z" /><path d="M7 138l5 3-5 3z" fill="#41464e" />
  </svg>
);

/* ---------- status bar ---------- */

const StatusTools = styled.div`
  display: flex;
  align-items: center;
  gap: 2px;
  margin-left: auto;
  padding-right: 3px;
`;
const StatusButton = styled.button<{ $w: number; $on?: boolean }>`
  display: flex;
  align-items: center;
  justify-content: center;
  gap: 5px;
  width: ${p => p.$w}px;
  height: 17px;
  background: ${p => (p.$on ? '#5486bd' : '#303947')};
  font-weight: 700;
  white-space: nowrap;
`;
const W = '#e4e7ea';
const person = <path d="M5.500 1L1 12l4.500-4 4.500 4z" fill={W} stroke={W} strokeWidth=".5" />;

const StatusBar = () => (
  <Strip $h={23}>
    <MenuButton aria-label="Layout menu" />
    <SlantTab $on $end={13}>Model</SlantTab>
    <SlantTab>Layout1</SlantTab><Slash />
    <SlantTab>Layout2</SlantTab><Slash />
    <Cell aria-label="New layout" $w={24}><Plus /></Cell><Slash />
    <StatusTools>
      <StatusButton $w={38}>MODEL</StatusButton>
      <StatusButton $w={17} $on aria-label="Grid"><Ico w={13} h={13}><path d="M3.500 0v13M6.500 0v13M9.500 0v13M0 3.500h13M0 6.500h13M0 9.500h13" stroke={W} /></Ico></StatusButton>
      <StatusButton $w={29} aria-label="Snap"><Ico w={10} h={10}><path d="M1 0v10M5 0v10M9 0v10" stroke={W} strokeWidth="2" strokeDasharray="2 2" /></Ico><Caret big /></StatusButton>
      <StatusButton $w={16} aria-label="Ortho"><Ico w={13} h={13}><path d="M1.500 0v11.500H13M1.500 8.500h3v3" stroke={G} /></Ico></StatusButton>
      <StatusButton $w={17} $on aria-label="Polar tracking"><Ico w={14} h={14}><path d="M11 4a5.500 5.500 0 101 4M7 7.500h6M7 7.500l5-6" stroke={W} /></Ico></StatusButton>
      <StatusButton $w={9} aria-label="Polar options"><Caret big /></StatusButton>
      <StatusButton $w={30} aria-label="Isometric drafting"><Ico w={11} h={13}><path d="M2 2l8 9" stroke="#9aa1ab" /><path d="M6 1v11" stroke="#68a36d" /><path d="M6 6l4 5M1 1l4 5" stroke="#c1575a" /></Ico><Caret big /></StatusButton>
      <StatusButton $w={16} $on aria-label="Object snap tracking"><Ico w={13} h={13}><path d="M12 2L1 11.500h12" stroke={W} /></Ico></StatusButton>
      <StatusButton $w={16} $on aria-label="Object snap"><Ico w={13} h={13}><path d="M2.500 2.500h9v9h-9z" stroke={W} /><path d="M1 1h3v3H1z" fill="#a6cdf2" /></Ico></StatusButton>
      <StatusButton $w={12} aria-label="Object snap options"><Caret big /></StatusButton>
      <StatusButton $w={16} $on aria-label="Annotation visibility"><Ico w={13} h={13}>{person}<circle cx="10.500" cy="3" r="1.800" stroke={W} /></Ico></StatusButton>
      <StatusButton $w={16} aria-label="Auto scale"><Ico w={13} h={13}>{person}<path d="M9 1l3 0-2 2 2 0-3 3" stroke={W} /></Ico></StatusButton>
      <StatusButton $w={16} aria-label="Annotation scale"><Ico w={11} h={13}>{person}</Ico></StatusButton>
      <StatusButton $w={24}>1:1<Caret big /></StatusButton>
      <StatusButton $w={31} aria-label="Workspace"><Ico w={13} h={13}><circle cx="6.500" cy="6.500" r="3.500" stroke={W} strokeWidth="2" /><path d="M6.500 0v3M6.500 10v3M0 6.500h3M10 6.500h3M2 2l2 2M9 9l2 2M11 2L9 4M4 9l-2 2" stroke={W} strokeWidth="2" /></Ico><Caret big /></StatusButton>
      <StatusButton $w={17} aria-label="Annotation monitor"><Plus /></StatusButton>
      <StatusButton $w={20} aria-label="Isolate objects"><Ico w={13} h={13}><path d="M1.500.5h4v5h-4zM5 12.500l3-5 3 5z" stroke={G} /><circle cx="10" cy="4" r="2" stroke={G} /><circle cx="3" cy="9.500" r="1.500" stroke={G} /></Ico></StatusButton>
      <StatusButton $w={20} aria-label="Hardware acceleration"><Ico w={12} h={13}><path d="M1 1h7l3 5-3 1H1z" fill="#d9dbde" /><path d="M1 3h6v6H1z" fill="#3aa2e8" /><path d="M4 7h6v5H4z" fill="#f4c560" /><path d="M6 9h6v2H6z" fill="#4f86c0" /></Ico></StatusButton>
      <StatusButton $w={20} aria-label="Clean screen"><Ico w={13} h={11}><path d="M.5.5h12v9H.5zM2.500 7.500v-2M2.500 7.500h2M10.500 2.500h-2M10.500 2.500v2" stroke={W} /></Ico></StatusButton>
      <StatusButton $w={16} aria-label="Customization"><Ico w={13} h={11}><path d="M0 1h13M0 5.500h13M0 10h13" stroke={W} strokeWidth="2" /></Ico></StatusButton>
    </StatusTools>
  </Strip>
);

/* ---------- taskbar ---------- */

const TaskBar = styled.footer`
  display: flex;
  align-items: stretch;
  height: 31px;
  background: #d6d6d6;
  color: #2c2c2c;
  font-family: "Noto Sans", "Open Sans", sans-serif;
  font-size: 11px;
`;
const TaskSearch = styled.label`
  display: flex;
  align-items: center;
  gap: 8px;
  width: 218px;
  margin: 1px 0;
  padding: 0 7px 0 8px;
  background: #fff;
`;
const TaskInput = styled.input`
  flex: 1;
  min-width: 0;
  border: 0;
  padding: 0;
  background: transparent;
  &::placeholder { color: #404040; opacity: 1; }
`;
const TaskApp = styled.button<{ $run?: boolean; $on?: boolean }>`
  display: flex;
  align-items: center;
  justify-content: center;
  width: ${p => (p.$on ? 36 : 32)}px;
  margin-left: ${p => (p.$on ? 4 : 6)}px;
  padding-top: 2px;
  border-bottom: 2px solid ${p => (p.$run ? '#1a76c8' : 'transparent')};
  background: ${p => (p.$on ? '#f0f0f0' : 'transparent')};
`;
const Tray = styled.div`
  display: flex;
  align-items: center;
  gap: 7px;
  margin-left: auto;
  padding-right: 18px;
`;
const Weather = styled.button`
  display: flex;
  align-items: center;
  gap: 7px;
  margin-right: 12px;
  font-size: 10px;
`;
const Clock = styled.time`
  width: 54px;
  margin-right: 4px;
  text-align: center;
  font-size: 9px;
  line-height: 14px;
`;

const Taskbar = () => (
  <TaskBar>
    <Cell aria-label="Start" $w={38}><Ico w={13} h={13}><path d="M0 2l5-1v5H0zM6 1l7-1v6H6zM0 7h5v5l-5-1zM6 7h7v6l-7-1z" fill="#151515" /></Ico></Cell>
    <TaskSearch>
      <Ico w={13} h={13}><circle cx="8" cy="5" r="4.500" stroke="#333" /><path d="M5 8.500L1 12.500" stroke="#333" /></Ico>
      <TaskInput aria-label="Search Windows" placeholder="Type here to search" />
      <Ico w={46} h={20}>
        <path d="M17 1c1 6 3 7 8 8-5 1-7 2-8 8-1-6-3-7-8-8 5-1 7-2 8-8z" fill="#f5b822" stroke="#f5b822" strokeWidth="2" strokeLinejoin="round" /><path d="M17 3c1 4 2 5 5 6-3 1-4 2-5 6z" fill="#fbd860" />
        <path d="M35 8c0 2 1 4 4 4-3 1-4 2-4 4-1-2-2-3-4-4 2-1 3-2 4-4z" fill="#f7bf31" stroke="#f7bf31" />
        <path d="M3 12l1 2 2 1-2 1-1 2-1-2-2-1 2-1z" fill="#1ba1e2" stroke="#1ba1e2" />
        <circle cx="30" cy="1.500" r="1.500" fill="#e8592b" /><circle cx="44" cy="17" r="1.500" fill="#6abf3b" />
      </Ico>
    </TaskSearch>
    <Cell aria-label="Task view" $w={37}><Ico w={13} h={13}><path d="M.5 3.500h8v6h-8zM.5 0v1.500h8V0M.5 13v-1.500h8V13M11.500 0v3M11.500 5v3M11.500 10v3" stroke="#333" /></Ico></Cell>
    <TaskApp $run aria-label="File Explorer"><Ico w={17} h={15}><path d="M0 1h6l2 2h9v11H0z" fill="#f3b632" /><path d="M0 5h17v9H0z" fill="#fcd566" /><path d="M3 14V8h11v6h-3v-3H6v3z" fill="#3b8ad8" /></Ico></TaskApp>
    <TaskApp $run aria-label="Edge"><Ico w={18} h={18}><circle cx="9" cy="9" r="9" fill="#1b74c5" /><path d="M0 9a9 9 0 0118-1c0 3-2 4-5 4-2 0-1-2-2-3-2-5-9-4-11 0z" fill="#38c1a2" /><path d="M6 9c0 5 5 8 9 6 1 0 0 2-3 3-6 1-11-3-8-9 1-2 3-2 4-2-1 0-2 1-2 2z" fill="#1457a8" /><path d="M8 9c0 3 4 5 8 4l-1-1c-3 0-4-1-4-3-1-1-3-1-3 0z" fill="#e9eef2" /></Ico></TaskApp>
    <TaskApp aria-label="Video editor"><Ico w={14} h={17}><path d="M0 1l8 4v7l-8 5z" fill="#34b6ea" /><path d="M0 1l14 7-8 5V8z" fill="#ef6fa8" /><path d="M0 17V9l7 4z" fill="#49d6b2" /><path d="M6 6l8 3-7 4z" fill="#f48b62" /></Ico></TaskApp>
    <TaskApp $run $on aria-label="AutoCAD">
      <svg width="17" height="19" viewBox="0 0 17 19" textAnchor="middle" fontWeight="700" fill="#fff">
        <path d="M1 0h15v13H1z" fill="#e51050" /><path d="M1 13h15l1 6H2z" fill="#7c0d2e" />
        <text x="8.500" y="11" fontSize="11">A</text><text x="9" y="17" fontSize="4">CAD</text>
      </svg>
    </TaskApp>
    <TaskApp $run aria-label="Discord">
      <svg width="20" height="20" viewBox="0 0 20 20" fill="#fff">
        <circle cx="9" cy="9" r="9" fill="#5563ea" /><path d="M5 5c3-1 5-1 8 0 1 2 2 4 2 7l-3 1-1-1H7l-1 1-3-1c0-3 1-5 2-7z" /><circle cx="7" cy="9" r="1.300" fill="#5563ea" /><circle cx="11" cy="9" r="1.300" fill="#5563ea" />
        <circle cx="14" cy="14" r="5.500" fill="#e2494d" /><text x="14" y="17" fontSize="8" textAnchor="middle">1</text>
      </svg>
    </TaskApp>
    <TaskApp $run aria-label="Photos"><Ico w={17} h={17}><rect width="17" height="17" rx="2" fill="#1d5fb8" /><path d="M1 16l8-9 7 9z" fill="#6fc5f5" /><path d="M1 3l15 14H1z" fill="#2f86d8" opacity=".5" /><circle cx="13" cy="4" r="1.500" fill="#fff" /></Ico></TaskApp>
    <TaskApp $run aria-label="Word">
      <svg width="17" height="18" viewBox="0 0 17 18">
        <rect x="3" width="14" height="17" rx="2" fill="#2b7cd8" /><path d="M3 2q0-2 2-2h10q2 0 2 2v3H3z" fill="#7fd0f7" /><path d="M3 5h14v4H3z" fill="#3ba1ee" />
        <rect y="8" width="9" height="9" rx="1" fill="#1748a3" /><text x="4.500" y="15" fontSize="7" fontWeight="700" textAnchor="middle" fill="#fff">W</text>
      </svg>
    </TaskApp>
    <Tray>
      <Weather>
        <svg width="19" height="18" viewBox="0 0 19 18">
          <path d="M6 1a6 6 0 015 9H3a6 6 0 013-9z" fill="#f6a623" /><path d="M4 17a4 4 0 010-7 5 5 0 019-1 4 4 0 013 8z" fill="#a9c9ef" />
          <circle cx="14" cy="5" r="5" fill="#c8302c" /><text x="14" y="8" fontSize="8" textAnchor="middle" fill="#fff">2</text>
        </svg>
        <span>8°C</span>
        <span>Mostly cloudy</span>
      </Weather>
      <Cell aria-label="Hidden icons"><Ico w={10} h={6}><path d="M1 5.500l4-4 4 4" stroke="#333" /></Ico></Cell>
      <Cell aria-label="Network"><Ico w={11} h={11}><path d="M1.500 10.500a9 9 0 019-9M4.500 10.500a6 6 0 016-6M7.500 10.500a3 3 0 013-3" stroke="#666" /><path d="M9 9h2v2H9z" fill="#333" /></Ico></Cell>
      <Cell aria-label="Meet now"><Ico w={9} h={12}><path d="M1.500 3.500h5v5h-5zM6.500 5.500l2-1v4l-2-1M2 1.500c2-1 3-1 5 0M2 10.500c2 1 3 1 5 0" stroke="#333" /></Ico></Cell>
      <Cell aria-label="Battery"><Ico w={13} h={9}><path d="M.5 1.500h10v6H.5zM12 3v3" stroke="#333" /><path d="M1 2h5v5H1z" fill="#111" /></Ico></Cell>
      <Cell aria-label="Volume muted"><Ico w={11} h={10}><path d="M.5 3.500h2l3-3v9l-3-3h-2zM7 3.500l3 3M10 3.500l-3 3" stroke="#333" /></Ico></Cell>
      <Clock>18:03<br />12/01/2026</Clock>
      <Cell aria-label="Notifications"><Ico w={13} h={13}><path d="M.5.500h12v7M.5.500v9h4v3l3-3M8 12c3 0 4-1 4-4 0 2 0 4-4 4z" stroke="#333" /></Ico></Cell>
    </Tray>
  </TaskBar>
);

export default function App() {
  return (
    <Page>
      <Global />
      <Title />
      <RibbonTabs aria-label="Ribbon tabs">
        {tabs.map((t, i) => <RibbonTab key={t} $on={i === 0}>{t}</RibbonTab>)}
        <RibbonToggle aria-label="Minimize ribbon"><Ico w={12} h={7}><path d="M0 0h12v7H0z" fill="#e3e5e8" /><path d="M4 5l2-2 2 2z" fill="#333" /></Ico><Caret /></RibbonToggle>
      </RibbonTabs>
      <Ribbon>
        <DrawPanel />
        <ModifyPanel />
        <AnnotationPanel />
        <UtilitiesPanel />
        <LayersPanel />
        <BlockPanel />
        {collapsed.map(([n, art]) => (
          <Collapsed key={n}><Ico w={26} h={27}>{art}</Ico><span>{n}</span><Caret big /></Collapsed>
        ))}
        <RibbonRest />
      </Ribbon>
      <Strip $h={20} $top={2}>
        <MenuButton aria-label="File tab menu" />
        <Slash /><SlantTab>Start</SlantTab>
        <Slash /><SlantTab $end={15}>Drawing1*</SlantTab>
        <Slash /><SlantTab $end={15}>Drawing1.dxf</SlantTab>
        <Slash /><SlantTab $end={15}>TARDIS outline*</SlantTab>
        <SlantTab $on $end={9}>outline*<Ico w={7} h={7}><path d="M.5.5l6 6M6.500.5l-6 6" stroke="#c8ccd2" /></Ico></SlantTab>
        <Cell aria-label="New drawing" $w={25}><Plus /></Cell><Slash />
      </Strip>
      <Viewport>
        <Drawing />
        <ViewLabel>[−][Top][2D Wireframe]</ViewLabel>
        <DocButtons>
          <Cell aria-label="Minimize drawing"><Ico w={9} h={9}><path d="M1 7h7" stroke="#f0f0f0" strokeWidth="2" /></Ico></Cell>
          <Cell aria-label="Restore drawing"><Ico w={9} h={9}><path d="M1 3.500h5v5H1zM3 2V1h5v5H7" stroke="#f0f0f0" strokeWidth="1.500" /></Ico></Cell>
          <Cell aria-label="Close drawing"><Ico w={8} h={9}><path d="M1 1.500l6 6M7 1.500l-6 6" stroke="#f0f0f0" strokeWidth="2" /></Ico></Cell>
        </DocButtons>
        <ViewCube><CubeArt /></ViewCube>
        <Wcs>WCS<Caret c="#b4b8c6" /></Wcs>
        <NavBar aria-label="Navigation"><NavArt /></NavBar>
      </Viewport>
      <StatusBar />
      <Taskbar />
    </Page>
  );
}
